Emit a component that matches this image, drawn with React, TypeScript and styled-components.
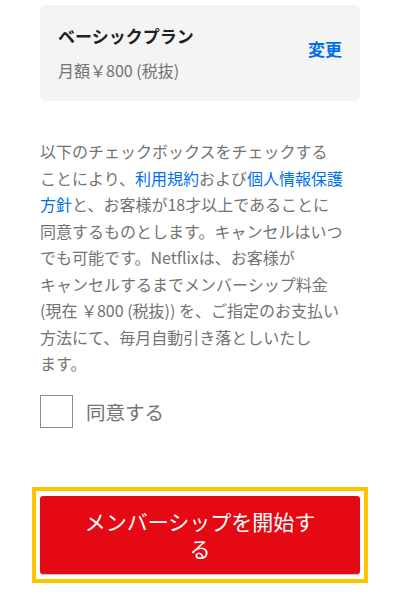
import React, { useState } from 'react';
import styled, { createGlobalStyle } from 'styled-components';

const GlobalStyle = createGlobalStyle`
  html, body {
    margin: 0;
    padding: 0;
    background: #fff;
  }
  body {
    font-family: 'Noto Sans CJK JP', 'Noto Sans', sans-serif;
    color: #333;
  }
`;

const Page = styled.div`
  width: 400px;
  height: 594px;
  padding: 5px 40px 0;
  box-sizing: border-box;
  overflow: hidden;
`;

const PlanCard = styled.div`
  height: 96px;
  box-sizing: border-box;
  background: #f4f4f4;
  border-radius: 6px;
  padding: 0 18px;
  display: flex;
  align-items: center;
  justify-content: space-between;
`;

const PlanInfo = styled.div`
  display: flex;
  flex-direction: column;
  gap: 10px;
  margin-top: -1px;
`;

const PlanName = styled.div`
  font-size: 17px;
  line-height: 25px;
  font-weight: 700;
  color: #222;
`;

const PlanPrice = styled.div`
  font-size: 16px;
  line-height: 24px;
  color: #737373;
`;

const ChangeLink = styled.a`
  font-size: 17px;
  font-weight: 700;
  color: #0071eb;
  text-decoration: none;
  margin-bottom: 10px;
`;

const Terms = styled.p`
  margin: 37px 0 0;
  font-size: 16px;
  line-height: 26.5px;
  color: #737373;
  white-space: nowrap;
`;

const TermsLink = styled.a`
  color: #0071eb;
  text-decoration: none;
`;

const AgreeRow = styled.label`
  display: flex;
  align-items: center;
  gap: 13px;
  margin-top: 18px;
  cursor: pointer;
`;

const Box = styled.span<{ checked: boolean }>`
  width: 33px;
  height: 33px;
  box-sizing: border-box;
  border: 1px solid #8c8c8c;
  background: #fff;
  display: flex;
  align-items: center;
  justify-content: center;
  color: #0071eb;
  font-size: 22px;
`;

const AgreeText = styled.span`
  font-size: 19.5px;
  color: #737373;
`;

const FocusRing = styled.div`
  margin: 59px -8px 0;
  padding: 5px 4px;
  border: 4px solid #fdc500;
`;

const StartButton = styled.button`
  width: 100%;
  height: 78px;
  border: none;
  border-radius: 3px;
  background: #e50914;
  box-shadow: 0 1px 1px rgba(0, 0, 0, 0.25);
  color: #fff;
  font-family: 'Noto Sans CJK JP', 'Noto Sans', sans-serif;
  font-size: 21px;
  line-height: 27px;
  padding: 0 40px;
  cursor: pointer;
`;

export default function App() {
  const [agreed, setAgreed] = useState(false);

  return (
    <>
      <GlobalStyle />
      <Page>
        <PlanCard>
          <PlanInfo>
            <PlanName>ベーシックプラン</PlanName>
            <PlanPrice>月額￥800 (税抜)</PlanPrice>
          </PlanInfo>
          <ChangeLink href="#">変更</ChangeLink>
        </PlanCard>

        {/* 利用規約の本文: 元画面の改行位置に合わせる */}
        <Terms>
          以下のチェックボックスをチェックする
          <br />
          ことにより、<TermsLink href="#">利用規約</TermsLink>および<TermsLink href="#">個人情報保護</TermsLink>
          <br />
          <TermsLink href="#">方針</TermsLink>と、お客様が18才以上であることに
          <br />
          同意するものとします。キャンセルはいつ
          <br />
          でも可能です。Netflixは、お客様が
          <br />
          キャンセルするまでメンバーシップ料金
          <br />
          (現在 ￥800 (税抜)) を、ご指定のお支払い
          <br />
          方法にて、毎月自動引き落としいたし
          <br />
          ます。
        </Terms>

        <AgreeRow onClick={() => setAgreed(!agreed)}>
          <Box checked={agreed}>{agreed ? '✓' : null}</Box>
          <AgreeText>同意する</AgreeText>
        </AgreeRow>

        <FocusRing>
          <StartButton type="button">メンバーシップを開始する</StartButton>
        </FocusRing>
      </Page>
    </>
  );
}
